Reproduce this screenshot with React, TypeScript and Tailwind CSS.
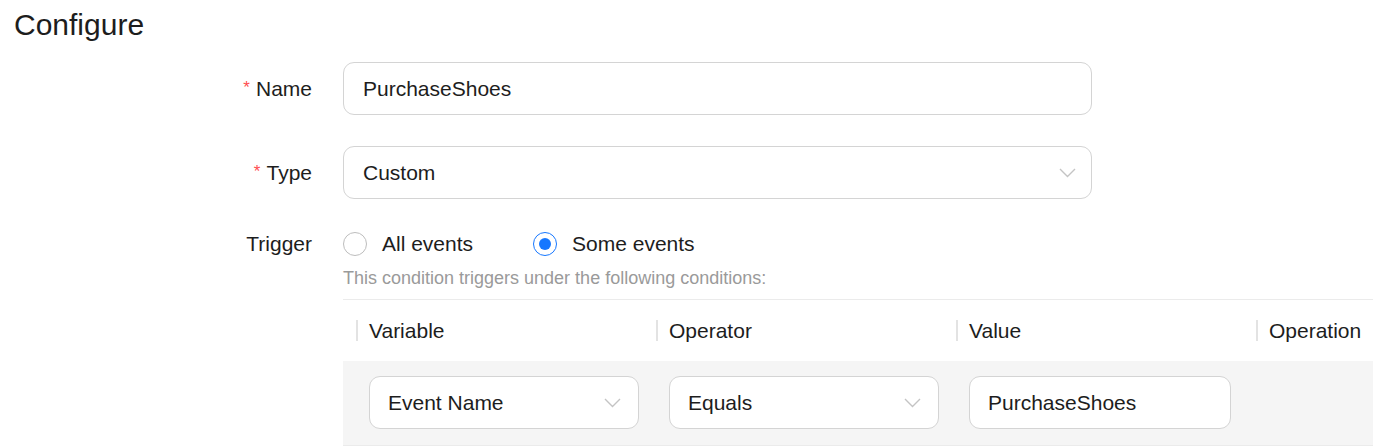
import React, { useState } from "react";

function Chevron({ className = "" }: { className?: string }) {
  return (
    <svg
      width="17"
      height="10"
      viewBox="0 0 17 10"
      fill="none"
      className={className}>
      <path d="M1 1l7.5 7.5L16 1" stroke="#c4c4c4" strokeWidth="1.4" />
    </svg>
  );
}

function Label({ text, required }: { text: string; required?: boolean }) {
  return (
    <div className="w-[312px] shrink-0 text-right pr-0">
      {required && <span className="text-[#ff4d4f] text-[17px] mr-[6px] relative top-[-3px]">*</span>}
      {text}
    </div>
  );
}

function Radio({
  checked,
  label,
  onClick,
}: {
  checked: boolean;
  label: string;
  onClick: () => void;
}) {
  return (
    <button onClick={onClick} className="flex items-center gap-[15px] cursor-pointer">
      <span
        className={`w-[24px] h-[24px] rounded-full border flex items-center justify-center bg-white ${
          checked ? "border-[#1677ff]" : "border-[#bdbdbd]"
        }`}>
        {checked && <span className="w-[12px] h-[12px] rounded-full bg-[#1677ff]" />}
      </span>
      <span>{label}</span>
    </button>
  );
}

export default function App() {
  const [trigger, setTrigger] = useState("some");
  const columns = ["Variable", "Operator", "Value", "Operation"];

  return (
    <div
      className="w-[1373px] h-[446px] bg-white text-[#1d1d1d] overflow-hidden"
      style={{ fontFamily: '"Liberation Sans", Arial, sans-serif' }}>
      <h1 className="text-[30px] leading-[36px] pl-[14px] pt-[7px]">Configure</h1>

      <div className="mt-[19px] text-[21px]">
        {/* Name */}
        <div className="flex items-center">
          <Label text="Name" required />
          <div className="ml-[31px] w-[749px] h-[53px] border border-[#d4d4d4] rounded-[11px] flex items-center px-[19px]">
            PurchaseShoes
          </div>
        </div>

        {/* Type */}
        <div className="flex items-center mt-[31px]">
          <Label text="Type" required />
          <div className="ml-[31px] w-[749px] h-[53px] border border-[#d4d4d4] rounded-[11px] flex items-center justify-between pl-[19px] pr-[15px]">
            <span>Custom</span>
            <Chevron />
          </div>
        </div>

        {/* Trigger */}
        <div className="flex mt-[29px]">
          <Label text="Trigger" />
          <div className="ml-[31px] flex-1">
            <div className="flex items-center gap-[60px] h-[30px] mt-[1px]">
              <Radio checked={trigger === "all"} label="All events" onClick={() => setTrigger("all")} />
              <Radio checked={trigger === "some"} label="Some events" onClick={() => setTrigger("some")} />
            </div>
            <p className="text-[18px] leading-[24px] text-[#9a9a9a] mt-[7px]">
              This condition triggers under the following conditions:
            </p>
            <div className="mt-[9px] border-t border-[#ebebeb]">
              <div className="grid grid-cols-[300px_300px_300px_1fr] h-[61px] items-center">
                {columns.map((c) => (
                  <div key={c} className="flex items-center pl-[13px]">
                    <span className="w-[2px] h-[21px] bg-[#e3e3e3] mr-[11px]" />
                    <span>{c}</span>
                  </div>
                ))}
              </div>
              <div className="grid grid-cols-[300px_300px_300px_1fr] bg-[#f5f5f5] pt-[15px] pb-[16px] border-b border-[#ebebeb]">
                <div className="pl-[26px]">
                  <div className="w-[270px] h-[53px] bg-white border border-[#d4d4d4] rounded-[11px] flex items-center justify-between pl-[18px] pr-[17px]">
                    <span>Event Name</span>
                    <Chevron />
                  </div>
                </div>
                <div className="pl-[26px]">
                  <div className="w-[270px] h-[53px] bg-white border border-[#d4d4d4] rounded-[11px] flex items-center justify-between pl-[18px] pr-[17px]">
                    <span>Equals</span>
                    <Chevron />
                  </div>
                </div>
                <div className="pl-[26px]">
                  <div className="w-[262px] h-[53px] bg-white border border-[#d4d4d4] rounded-[11px] flex items-center pl-[18px]">
                    PurchaseShoes
                  </div>
                </div>
                <div />
              </div>
            </div>
          </div>
        </div>
      </div>
    </div>
  );
}
